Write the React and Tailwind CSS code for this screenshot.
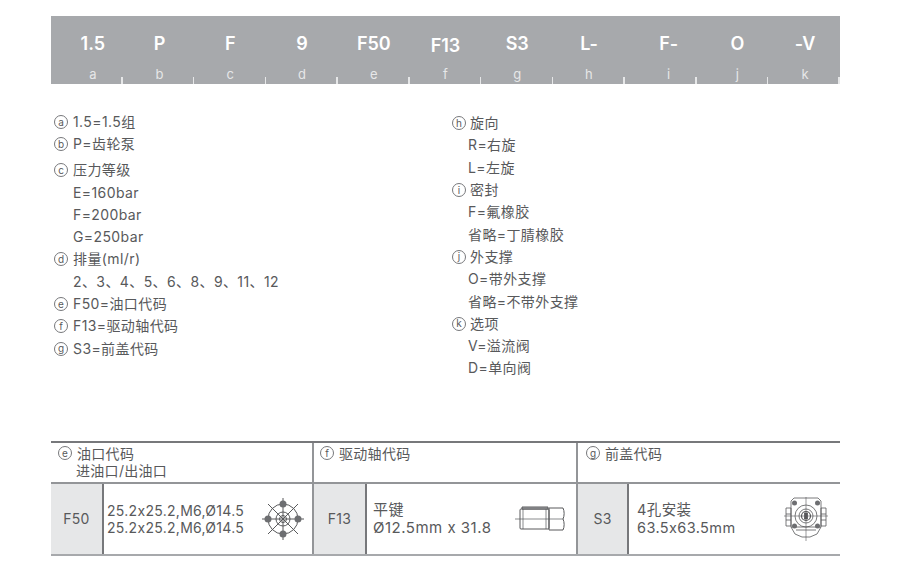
import React from 'react'

const CODES = [
  { code: '1.5', key: 'a', shift: 'pl-[12px]' },
  { code: 'P', key: 'b', shift: 'pl-[2px]' },
  { code: 'F', key: 'c' },
  { code: '9', key: 'd' },
  { code: 'F50', key: 'e' },
  { code: 'F13', key: 'f', low: true },
  { code: 'S3', key: 'g' },
  { code: 'L-', key: 'h' },
  { code: 'F-', key: 'i', shift: 'pl-[16px]' },
  { code: 'O', key: 'j', shift: 'pl-[10px]' },
  { code: '-V', key: 'k', shift: 'pl-[2px]' },
]

const LEFT = [
  { mark: 'a', text: '1.5=1.5组' },
  { mark: 'b', text: 'P=齿轮泵' },
  { mark: 'c', text: '压力等级', gap: true },
  { text: 'E=160bar' },
  { text: 'F=200bar' },
  { text: 'G=250bar' },
  { mark: 'd', text: '排量(ml/r)' },
  { text: '2、3、4、5、6、8、9、11、12' },
  { mark: 'e', text: 'F50=油口代码' },
  { mark: 'f', text: 'F13=驱动轴代码' },
  { mark: 'g', text: 'S3=前盖代码' },
]

const RIGHT = [
  { mark: 'h', text: '旋向' },
  { text: 'R=右旋' },
  { text: 'L=左旋' },
  { mark: 'i', text: '密封' },
  { text: 'F=氟橡胶' },
  { text: '省略=丁腈橡胶' },
  { mark: 'j', text: '外支撑' },
  { text: 'O=带外支撑' },
  { text: '省略=不带外支撑' },
  { mark: 'k', text: '选项' },
  { text: 'V=溢流阀' },
  { text: 'D=单向阀' },
]

const Mark = ({ children }) => (
  <span className="flex h-[14px] w-[14px] shrink-0 items-center justify-center rounded-full border border-[#77787b] pb-[1px] text-[10px] leading-none tracking-normal text-[#58595b]">
    {children}
  </span>
)

const SpecList = ({ rows, className, indent, gap }) => (
  <ul className={className}>
    {rows.map(row => (
      <li
        key={row.text}
        className={`flex h-[22.3px] items-center ${gap} ${row.gap ? 'mt-[3.500px]' : ''} ${row.mark ? '' : indent}`}
      >
        {row.mark && <Mark>{row.mark}</Mark>}
        <span>{row.text}</span>
      </li>
    ))}
  </ul>
)

const BoltIcon = () => (
  <svg width="44" height="44" viewBox="0 0 44 44" fill="none" stroke="#58595b" strokeWidth="1">
    <circle cx="22" cy="22" r="15" />
    <circle cx="22" cy="22" r="7" />
    <circle cx="22" cy="22" r="3.500" />
    <path d="M22 1v42M1 22h42M7 7l30 30M37 7L7 37" />
    <g fill="#6d6e71" stroke="none">
      <circle cx="22" cy="7" r="3.500" />
      <circle cx="22" cy="37" r="3.500" />
      <circle cx="7" cy="22" r="3.500" />
      <circle cx="37" cy="22" r="3.500" />
    </g>
  </svg>
)

const ShaftIcon = () => (
  <svg width="50" height="26" viewBox="0 0 50 26" fill="none" stroke="#58595b" strokeWidth="1">
    <rect x="5" y="3" width="29" height="20" rx="1" />
    <path d="M7 1h26v2H7z" fill="#a7a9ac" />
    <path d="M34 2h14c1.500 3 1.500 8 0 11 1.500 3 1.500 8 0 11H34z" />
    <path d="M0 13h48M8 3v20M31 3v20" strokeWidth="0.7" />
  </svg>
)

const CoverIcon = () => (
  <svg width="44" height="44" viewBox="0 0 44 44" fill="none" stroke="#58595b" strokeWidth="0.8">
    <path d="M10 1h24l3 3v26H7V4z" />
    <path d="M2 11h5v18H2zM37 11h5v18h-5z" />
    <path d="M2 17h5M2 23h5M37 17h5M37 23h5" />
    <path d="M7 30l4 7 7 3h8l7-3 4-7M12 33h20" />
    <circle cx="22" cy="19" r="11" />
    <circle cx="22" cy="19" r="7" />
    <circle cx="22" cy="19" r="4.500" strokeWidth="1.200" />
    <rect x="20.500" y="16" width="3" height="6" fill="#58595b" />
    <path d="M22 0v44M0 19h44" strokeWidth="0.6" />
    <g fill="#6d6e71" stroke="none">
      <circle cx="10.500" cy="6" r="2.500" />
      <circle cx="33.500" cy="6" r="2.500" />
      <circle cx="10.500" cy="29" r="2.500" />
      <circle cx="33.500" cy="29" r="2.500" />
    </g>
  </svg>
)

const OPTIONS = [
  {
    mark: 'e',
    title: '油口代码',
    sub: '进油口/出油口',
    code: 'F50',
    lines: ['25.2x25.2,M6,Ø14.5', '25.2x25.2,M6,Ø14.5'],
    icon: <BoltIcon />,
    width: 'w-[261px]',
    pad: 'pl-[7px]',
    codeWidth: 'w-[53px]',
    iconPad: 'pr-[7px]',
    descPad: 'pl-[3px] text-[14px] leading-[17px] tracking-[0.3px]',
  },
  {
    mark: 'f',
    title: '驱动轴代码',
    code: 'F13',
    lines: ['平键', 'Ø12.5mm x 31.8'],
    icon: <ShaftIcon />,
    width: 'w-[264px] border-l-2 border-[#939598]',
    pad: 'pl-[6px]',
    codeWidth: 'w-[53px]',
    iconPad: 'pr-[11px]',
    descPad: 'pl-[6px] text-[15px] leading-[18px] tracking-[0.5px]',
  },
  {
    mark: 'g',
    title: '前盖代码',
    code: 'S3',
    lines: ['4孔安装', '63.5x63.5mm'],
    icon: <CoverIcon />,
    width: 'flex-1 border-l-2 border-[#939598]',
    pad: 'pl-[8px]',
    codeWidth: 'w-[51px]',
    iconPad: 'pr-[12px]',
    descPad: 'pl-[8px] text-[14.500px] leading-[18px] tracking-[0.4px]',
  },
]

const OptionCard = ({ option }) => (
  <div className={`flex flex-col ${option.width}`}>
    <div className={`h-[39px] pt-[2px] text-[14px] leading-[17px] tracking-[0.3px] ${option.pad}`}>
      <div className="flex items-center gap-[5px]">
        <Mark>{option.mark}</Mark>
        <span>{option.title}</span>
      </div>
      {option.sub && <div className="pl-[18px]">{option.sub}</div>}
    </div>
    <div className="flex h-[72px] border-t-2 border-[#939598]">
      <div className={`flex shrink-0 items-center justify-center border-r-2 border-[#77787b] bg-[#e6e7e8] tracking-[0.3px] ${option.codeWidth}`}>
        {option.code}
      </div>
      <div className={`flex flex-1 items-center justify-between ${option.iconPad}`}>
        <div className={option.descPad}>
          {option.lines.map((line, i) => (
            <div key={i}>{line}</div>
          ))}
        </div>
        {option.icon}
      </div>
    </div>
  </div>
)

export default function App() {
  return (
    <div
      className="min-h-[578px] bg-white pl-[51px] pt-[16px] text-[14px] text-[#58595b] [font-feature-settings:'calt'_0]"
      style={{ fontFamily: '"Inter", "Noto Sans CJK SC", sans-serif' }}
    >
      <div className="w-[789px]">
        <div className="grid h-[68px] grid-cols-11 bg-[#a7a9ac] text-white">
          {CODES.map(({ code, key, low, shift }) => (
            <div key={key} className={`relative flex flex-col items-center ${shift || ''}`}>
              <span className={`h-[48px] text-[18px] font-semibold leading-[24px] ${low ? 'pt-[18px]' : 'pt-[16px]'}`}>
                {code}
              </span>
              <span className="text-[13px] leading-[20px] text-[#e6e7e8]">{key}</span>
              <span className="absolute bottom-0 right-0 h-[7px] w-[1.500px] bg-[#e6e7e8]" />
            </div>
          ))}
        </div>

        <div className="flex pt-[27px] text-[14px] leading-[20px] tracking-[0.4px]">
          <SpecList rows={LEFT} className="w-[401px] pl-[3px]" indent="pl-[19px]" gap="gap-[5px]" />
          <SpecList rows={RIGHT} className="mt-[1px] flex-1" indent="pl-[16px]" gap="gap-[4px]" />
        </div>

        <div className="mt-[61px] flex border-y-2 border-t-[#77787b] border-b-[#a7a9ac]">
          {OPTIONS.map(option => (
            <OptionCard key={option.mark} option={option} />
          ))}
        </div>
      </div>
    </div>
  )
}
